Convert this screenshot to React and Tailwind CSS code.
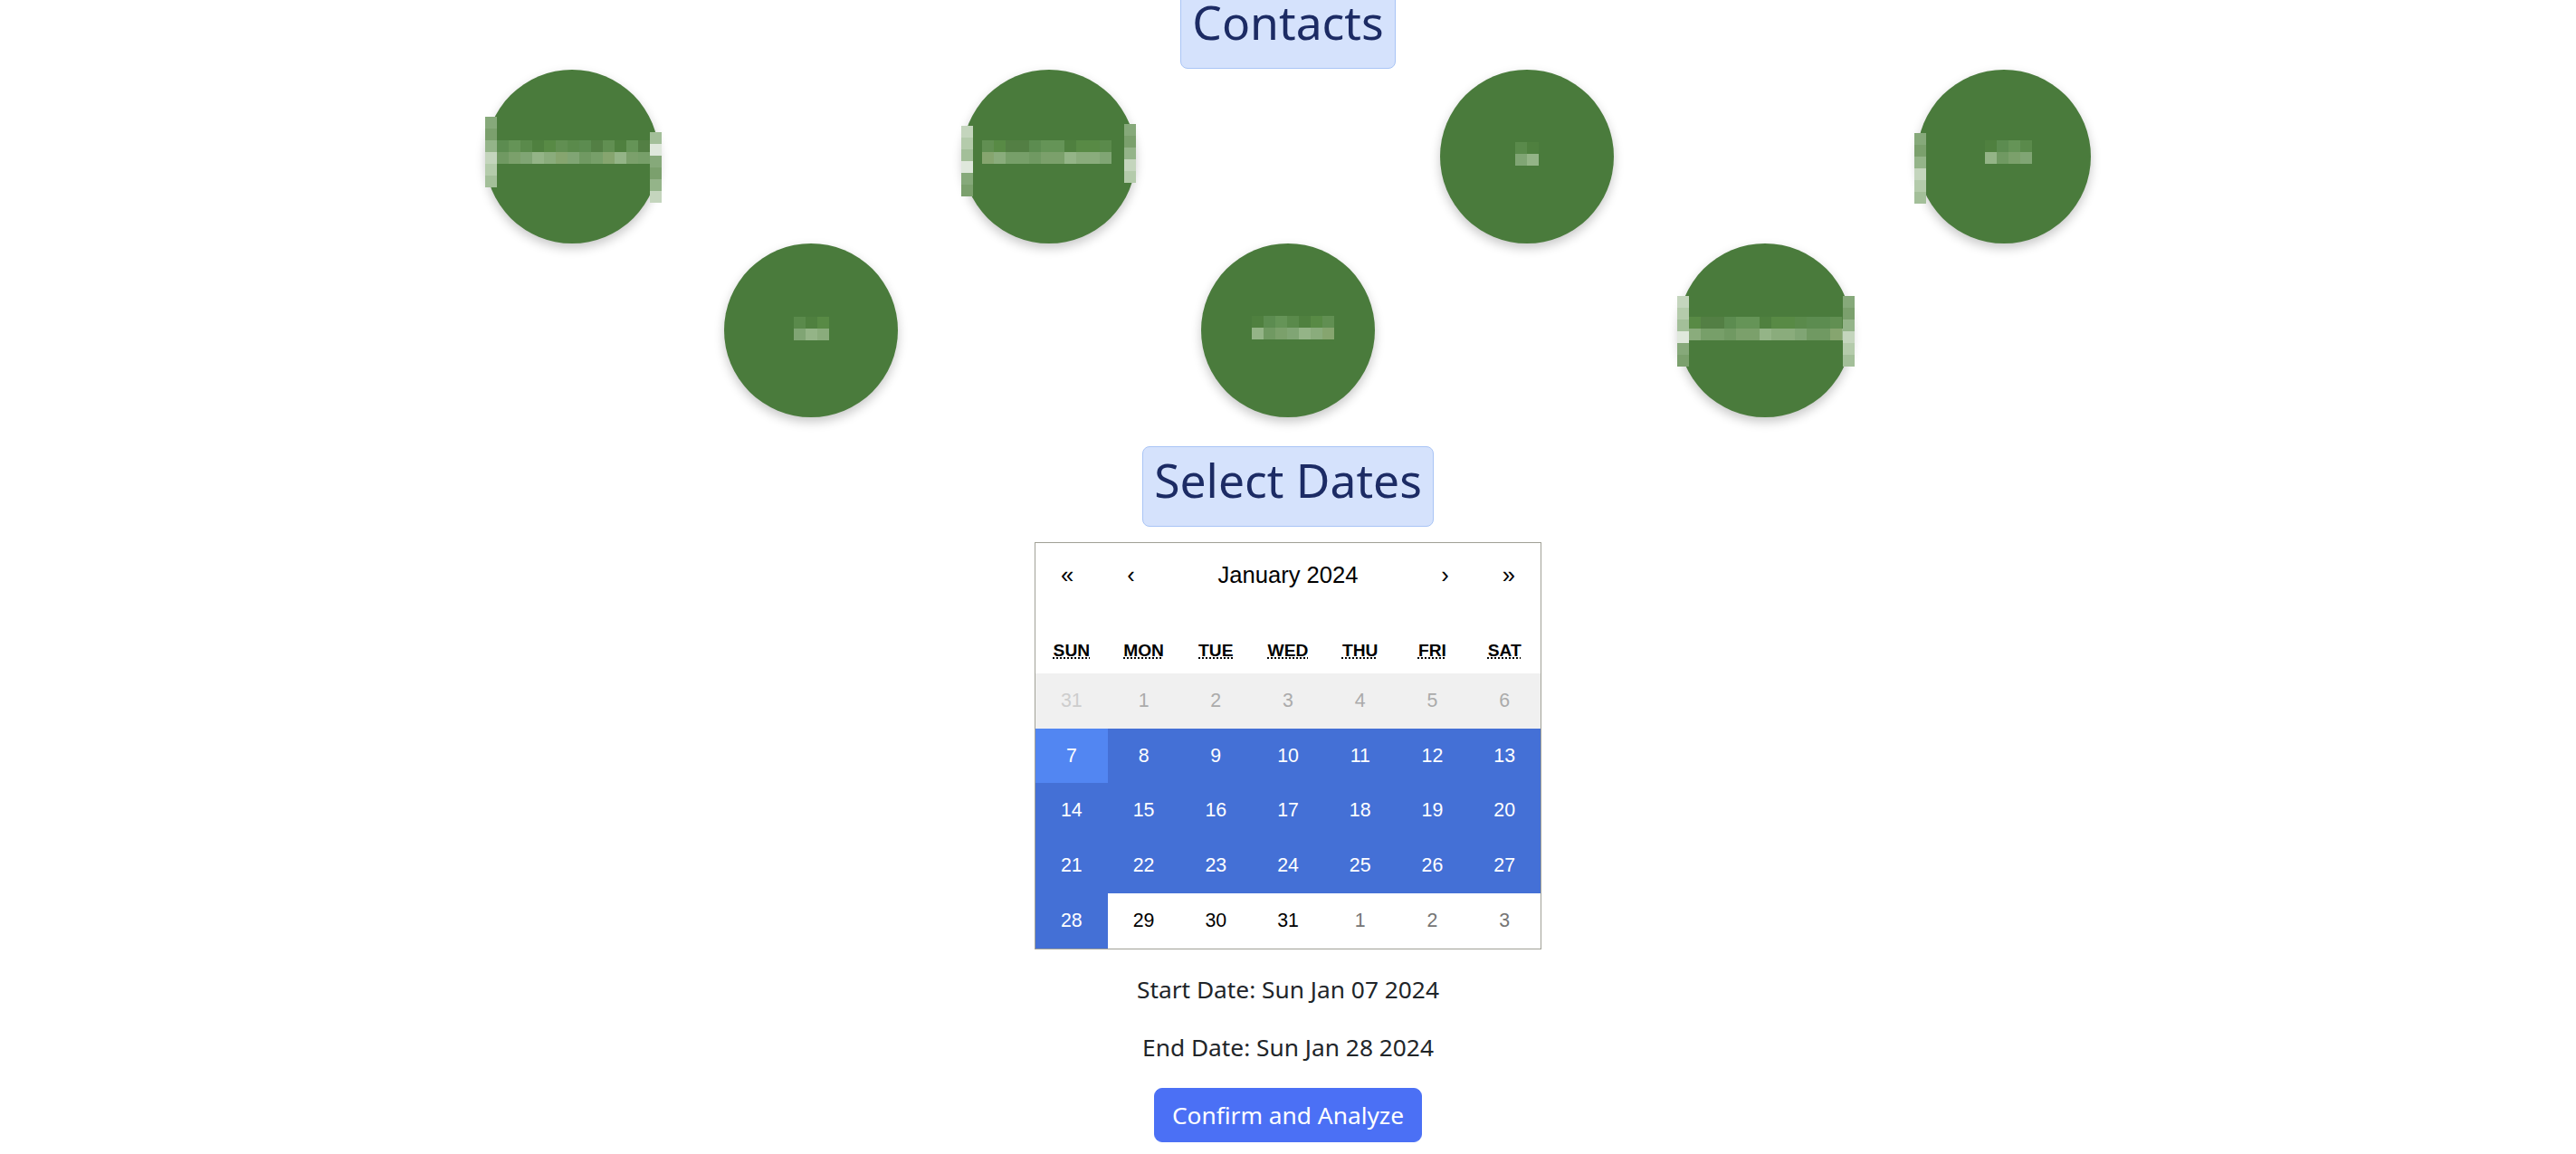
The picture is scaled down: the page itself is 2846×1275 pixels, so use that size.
import React from "react";

const BAND_PALETTES = [
  ["#4f803f", "#5a8a4b", "#618f52", "#537f44", "#659457", "#588a45", "#5c8c50"],
  ["#7ba06b", "#8aac7c", "#709962", "#94b487", "#80a574", "#86a56f", "#779f69"],
];
const EDGE_PALETTE = ["#86a97a", "#a3bf99", "#c4d5bd", "#7ba06d", "#dfe8dc", "#b4cbab", "#94b489"];

function Blocks({ left, top, cols, rows, palettes, seed }) {
  const rowEls = [];
  for (let r = 0; r < rows; r++) {
    const pal = palettes[r % palettes.length];
    const cells = [];
    for (let c = 0; c < cols; c++) {
      const color = pal[(c * 5 + r * 3 + seed * 7 + ((c * c + seed) % 3)) % pal.length];
      cells.push(<div key={c} className="w-[13px] h-[13px]" style={{ backgroundColor: color }} />);
    }
    rowEls.push(
      <div key={r} className="flex">
        {cells}
      </div>
    );
  }
  return (
    <div className="absolute flex flex-col" style={{ left, top }}>
      {rowEls}
    </div>
  );
}

const contacts = [
  { band: { left: 0, top: 78, cols: 15 }, edges: [{ left: 0, top: 52, rows: 6 }, { left: 182, top: 69, rows: 6 }] },
  { band: { left: 77, top: 81, cols: 3 }, edges: [] },
  { band: { left: 22, top: 78, cols: 11 }, edges: [{ left: -1, top: 62, rows: 6 }, { left: 179, top: 60, rows: 5 }] },
  { band: { left: 56, top: 80, cols: 7 }, edges: [] },
  { band: { left: 83, top: 80, cols: 2 }, edges: [] },
  { band: { left: -1, top: 81, cols: 15 }, edges: [{ left: -1, top: 58, rows: 6 }, { left: 182, top: 58, rows: 6 }] },
  { band: { left: 75, top: 78, cols: 4 }, edges: [{ left: -3, top: 70, rows: 6 }] },
];

function Contact({ spec, index }) {
  return (
    <div className={index % 2 === 1 ? "mt-[192px]" : ""}>
      <div className="relative w-[192px] h-[192px] rounded-full bg-[#4a7b3c] shadow-[0_5px_12px_rgba(0,0,0,0.22)]">
        <Blocks {...spec.band} rows={2} palettes={BAND_PALETTES} seed={index} />
        {spec.edges.map((e, i) => (
          <Blocks key={i} left={e.left} top={e.top} cols={1} rows={e.rows} palettes={[EDGE_PALETTE]} seed={index + i} />
        ))}
      </div>
    </div>
  );
}

const WEEKDAYS = ["Sun", "Mon", "Tue", "Wed", "Thu", "Fri", "Sat"];

function buildDays() {
  const days = [];
  days.push({ n: 31, cls: "bg-[#f0f0f0] text-[#cdcdcd]" });
  for (let d = 1; d <= 6; d++) days.push({ n: d, cls: "bg-[#f0f0f0] text-[#ababab]" });
  for (let d = 7; d <= 28; d++) {
    if (d === 7) days.push({ n: d, cls: "bg-[#5286f2] text-white" });
    else days.push({ n: d, cls: "bg-[#4470d6] text-white" });
  }
  for (let d = 29; d <= 31; d++) days.push({ n: d, cls: "bg-white text-black" });
  for (let d = 1; d <= 3; d++) days.push({ n: d, cls: "bg-white text-[#757575]" });
  return days;
}

function Calendar() {
  const days = buildDays();
  return (
    <div className="w-[560px] border border-[#a0a096] bg-white font-['Liberation_Sans',Arial,sans-serif] leading-[28.8px] text-black">
      <div className="flex h-[70.4px] mb-[25.6px] text-[25.6px]">
        <button type="button" className="w-[70.4px] flex items-center justify-center">«</button>
        <button type="button" className="w-[70.4px] flex items-center justify-center">‹</button>
        <button type="button" className="flex-1 flex items-center justify-center">January 2024</button>
        <button type="button" className="w-[70.4px] flex items-center justify-center">›</button>
        <button type="button" className="w-[70.4px] flex items-center justify-center">»</button>
      </div>
      <div className="grid grid-cols-7 text-center uppercase font-bold text-[19.2px]">
        {WEEKDAYS.map((d) => (
          <div key={d} className="p-[9.6px]">
            <abbr title={d} className="underline decoration-dotted">
              {d}
            </abbr>
          </div>
        ))}
      </div>
      <div className="grid grid-cols-7">
        {days.map((d, i) => (
          <div key={i} className={`h-[60.8px] flex items-center justify-center text-[21.33px] ${d.cls}`}>
            {d.n}
          </div>
        ))}
      </div>
    </div>
  );
}

export default function App() {
  return (
    <div className="min-h-screen bg-white flex flex-col items-center font-['Noto_Sans',sans-serif] text-[#212529] overflow-hidden">
      <h2 className="-mt-[13px] rounded-[8px] border border-[#a9c4f5] bg-[#d5e2fc] px-[12.5px] pt-[6px] pb-[19.5px] text-[51.6px] leading-[61.44px] text-[#1c2b64] font-normal">
        Contacts
      </h2>
      <div className="mt-px flex items-start gap-[71.7px]">
        {contacts.map((c, i) => (
          <Contact key={i} spec={c} index={i} />
        ))}
      </div>
      <h2 className="mt-[32px] rounded-[8px] border border-[#a9c4f5] bg-[#d5e2fc] px-[12.5px] pt-[6px] pb-[19.5px] text-[51.6px] leading-[61.44px] text-[#1c2b64] font-normal">
        Select Dates
      </h2>
      <div className="mt-[17px]">
        <Calendar />
      </div>
      <p className="mt-[25.6px] text-[26.3px] leading-[38.4px]">Start Date: Sun Jan 07 2024</p>
      <p className="mt-[25.6px] text-[26.3px] leading-[38.4px]">End Date: Sun Jan 28 2024</p>
      <button
        type="button"
        className="mt-[25.6px] rounded-[9px] border-[1.6px] border-[#4b70f5] bg-[#4b70f5] px-[19.2px] py-[9.6px] text-[26.3px] leading-[38.4px] text-white"
      >
        Confirm and Analyze
      </button>
    </div>
  );
}
